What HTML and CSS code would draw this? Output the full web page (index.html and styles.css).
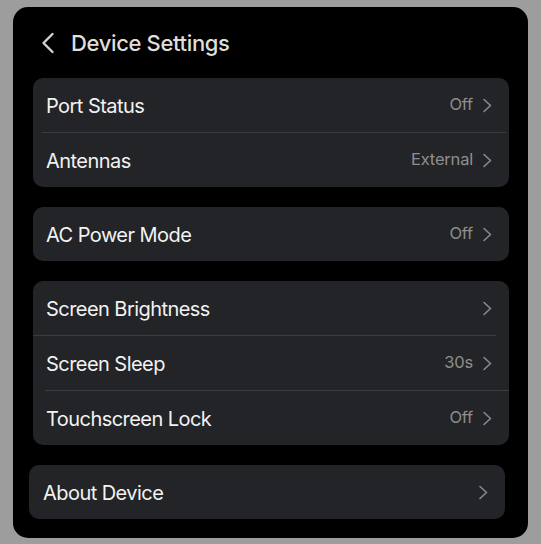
FILE: index.html
```html
<!DOCTYPE html>
<html>
<head>
<meta charset="utf-8">
<link rel="stylesheet" href="styles.css">
</head>
<body>
<div class="panel">
  <div class="header">
    <svg class="back" width="14" height="22" viewBox="0 0 14 22"><path d="M11.5 2 L2.5 11 L11.5 20" fill="none" stroke="#d2d2d2" stroke-width="2.4" stroke-linecap="round" stroke-linejoin="round"/></svg>
    <span class="title">Device Settings</span>
  </div>
  <div class="card">
    <div class="row"><span class="label">Port Status</span><span class="value">Off</span><svg class="chev" width="11" height="15" viewBox="0 0 11 15"><path d="M2 1.5 L8.5 7.5 L2 13.5" fill="none" stroke="#8a8a8c" stroke-width="1.6" stroke-linecap="round" stroke-linejoin="round"/></svg></div>
    <div class="divider d-a"></div>
    <div class="row"><span class="label">Antennas</span><span class="value">External</span><svg class="chev" width="11" height="15" viewBox="0 0 11 15"><path d="M2 1.5 L8.5 7.5 L2 13.5" fill="none" stroke="#8a8a8c" stroke-width="1.6" stroke-linecap="round" stroke-linejoin="round"/></svg></div>
  </div>
  <div class="card">
    <div class="row"><span class="label">AC Power Mode</span><span class="value">Off</span><svg class="chev" width="11" height="15" viewBox="0 0 11 15"><path d="M2 1.5 L8.5 7.5 L2 13.5" fill="none" stroke="#8a8a8c" stroke-width="1.6" stroke-linecap="round" stroke-linejoin="round"/></svg></div>
  </div>
  <div class="card">
    <div class="row"><span class="label">Screen Brightness</span><span class="value"></span><svg class="chev" width="11" height="15" viewBox="0 0 11 15"><path d="M2 1.5 L8.5 7.5 L2 13.5" fill="none" stroke="#8a8a8c" stroke-width="1.6" stroke-linecap="round" stroke-linejoin="round"/></svg></div>
    <div class="divider d-b"></div>
    <div class="row"><span class="label">Screen Sleep</span><span class="value">30s</span><svg class="chev" width="11" height="15" viewBox="0 0 11 15"><path d="M2 1.5 L8.5 7.5 L2 13.5" fill="none" stroke="#8a8a8c" stroke-width="1.6" stroke-linecap="round" stroke-linejoin="round"/></svg></div>
    <div class="divider d-c"></div>
    <div class="row"><span class="label">Touchscreen Lock</span><span class="value">Off</span><svg class="chev" width="11" height="15" viewBox="0 0 11 15"><path d="M2 1.5 L8.5 7.5 L2 13.5" fill="none" stroke="#8a8a8c" stroke-width="1.6" stroke-linecap="round" stroke-linejoin="round"/></svg></div>
  </div>
  <div class="card card-shift">
    <div class="row row-about"><span class="label">About Device</span><span class="value"></span><svg class="chev" width="11" height="15" viewBox="0 0 11 15"><path d="M2 1.5 L8.5 7.5 L2 13.5" fill="none" stroke="#8a8a8c" stroke-width="1.6" stroke-linecap="round" stroke-linejoin="round"/></svg></div>
  </div>
</div>
</body>
</html>
```

FILE: styles.css
```css
* { box-sizing: border-box; }
html, body { margin: 0; padding: 0; }
body {
  background: #9d9d9d;
  font-family: Inter, "Noto Sans", sans-serif;
  width: 541px;
  height: 544px;
  overflow: hidden;
  padding-top: 7px;
}
.panel {
  margin-left: 13px;
  width: 515px;
  height: 531px;
  background: #000;
  border-radius: 15px;
  padding: 0 19px 0 20px;
}
.header {
  height: 71px;
  padding: 14px 0 13px 8px;
  display: flex;
  align-items: center;
}
.back { display: block; margin-right: 16px; margin-left: 0; }
.title {
  font-size: 22px;
  font-weight: 500;
  color: #dedede;
  letter-spacing: -0.35px;
}
.card {
  background: #232427;
  border-radius: 10px;
  margin-bottom: 20px;
}
.card-shift {
  margin-left: -4px;
  margin-right: 4px;
}
.row {
  height: 54px;
  display: flex;
  align-items: center;
  padding: 2px 16px 0 13px;
}
.row-about { padding-left: 14px; }
.label {
  flex: 1;
  font-size: 20px;
  color: #f2f2f2;
  letter-spacing: -0.55px;
}
.value {
  font-size: 16.5px;
  color: #8e8e90;
  margin-right: 9px;
  margin-bottom: 4px;
  letter-spacing: -0.2px;
}
.chev { display: block; margin-top: -2px; }
.divider { height: 1px; background: #3b3c40; }
.d-a { margin: 0 3px 0 9px; }
.d-b { margin: 0 13px 0 0; }
.d-c { margin: 0 0 0 12px; }
```
